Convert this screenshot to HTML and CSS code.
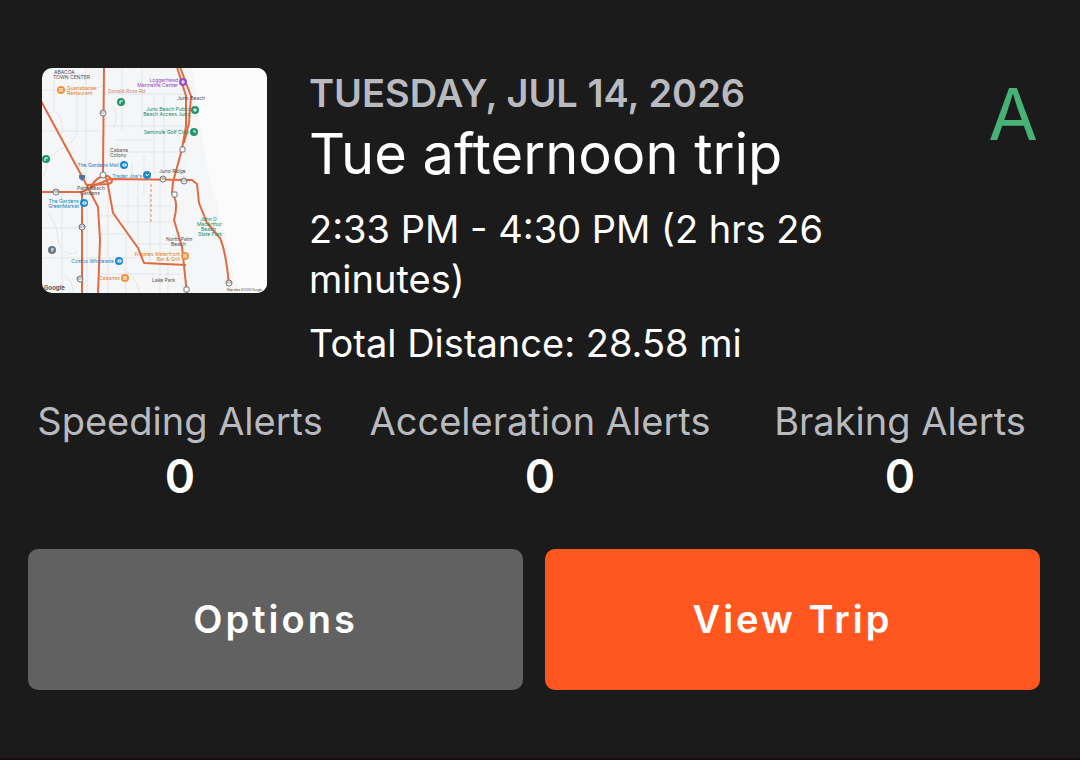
FILE: index.html
```
<!DOCTYPE html>
<html lang="en">
<head>
  <meta charset="UTF-8">
  <meta name="viewport" content="width=device-width, initial-scale=1">
  <title>Tue afternoon trip</title>
  <link rel="stylesheet" href="styles.css">
</head>
<body>
  <main class="trip">
    <div class="trip-top">
      <!-- route map -->
      <svg class="map" viewBox="0 0 225 225" role="img" aria-label="Trip map">
        <rect width="225" height="225" fill="#f5f6f7"/>
        <path d="M150 0 L158 55 L168 112 L180 155 L196 225 H225 V0Z" fill="#fbfbfc"/>
        <!-- side streets -->
        <g class="streets">
          <path d="M0 63H60 M62 58H150 M0 22H45L62 18 M44 0V112 M100 0V60 M12 12V42Q22 50 20 65 M35 24V62Q34 74 20 80T2 108"/>
          <path d="M80 0V62 M62 26H142 M112 26V106 M122 28V110 M62 84H138 M90 94V112 M102 88V128 M74 72H110 M120 62H145"/>
          <path d="M0 190H100 M20 125V225 M0 160H40 M66 126V225 M57 148H72 M57 166H82 M45 140V225 M56 206H140 M84 160V225"/>
          <path d="M86 112V158 M96 112V176 M108 126V195 M118 112V225 M70 138H130 M80 154H132 M95 176H138 M126 196V225"/>
          <path d="M4 145Q14 150 16 170T36 184 M72 196Q92 202 98 225 M70 38Q77 44 72 60 M22 206Q30 212 32 225"/>
        </g>
        <!-- highlighted roads -->
        <g class="roads">
          <path d="M-1 33L43 114L56 139L58 172L56 226"/>
          <path d="M62 -1L61 104L65 112L71 145L81 159L96 180L102 195L144 197"/>
          <path d="M-1 124H40V226"/>
          <path d="M40 124L56 116L68 111L150 112L155 116L157 135L165 155L178 170Q184 184 187 217"/>
          <path d="M135 -1L144 28V58L140 81L131 114L130 125Q137 134 132 152L140 179L145 226"/>
          <path d="M138 -1L149 28L147 55L142 75"/>
          <path d="M48 121Q54 107 66 108Q74 114 66 116L44 117"/>
        </g>
        <path d="M109 116V155" class="dashed"/>
        <!-- route shields -->
        <g class="shields">
          <circle cx="61" cy="45" r="3"/>
          <circle cx="14" cy="124" r="3"/>
          <circle cx="40" cy="159" r="3"/>
          <circle cx="38" cy="211" r="3"/>
          <circle cx="61" cy="107" r="3"/>
          <circle cx="121" cy="111" r="3"/>
          <circle cx="142" cy="113" r="3"/>
          <circle cx="187" cy="215" r="3"/>
          <rect x="138" y="79" width="5" height="5" rx="1"/>
          <rect x="130" y="124" width="5" height="5" rx="1"/>
          <rect x="142" y="219" width="5" height="5" rx="1"/>
        </g>
        <g class="route-no">
          <text x="61" y="46">811</text>
          <text x="14" y="125">786</text>
          <text x="40" y="160">809</text>
          <text x="38" y="212">809</text>
          <text x="121" y="112">786</text>
          <text x="142" y="114">A1A</text>
          <text x="187" y="216">A1A</text>
        </g>
        <!-- place pins -->
        <g class="pins">
          <circle cx="19" cy="22" r="4" fill="#ee923c"/>
          <circle cx="79" cy="34" r="4" fill="#21966b"/>
          <circle cx="4" cy="91" r="4" fill="#21966b"/>
          <circle cx="141" cy="14" r="4" fill="#9751c9"/>
          <circle cx="153" cy="42" r="4" fill="#21966b"/>
          <circle cx="152" cy="64" r="4" fill="#21966b"/>
          <circle cx="82" cy="97" r="4" fill="#1b8bd0"/>
          <circle cx="105" cy="107" r="4" fill="#1b8bd0"/>
          <circle cx="42" cy="135" r="4" fill="#1b8bd0"/>
          <circle cx="77" cy="193" r="4" fill="#1b8bd0"/>
          <circle cx="10" cy="182" r="4" fill="#647987"/>
          <circle cx="83" cy="210" r="4" fill="#ee923c"/>
          <circle cx="143" cy="188" r="4" fill="#ee923c"/>
          <path d="M37 107h6v3l-3 3l-3-3z" fill="#526fa8"/>
        </g>
        <g class="pin-marks">
          <path d="M18 20v4M20 20v4M78 33h3M78 33v3M3 90h3M3 90v3M139 14h4M141 12v4M152 43h2v-2h-2zM151 63h2v2M81 98v-2h3v2zM104 106l1 2l2-2M41 136v-2h3v2zM76 194v-2h3v2zM9 181h3M10 181v3M82 208v4M84 208v4M142 186v4M144 186v4"/>
        </g>
        <!-- labels -->
        <g class="labels">
          <g fill="#4c5158">
            <text x="12" y="6">ABACOA</text>
            <text x="11" y="11">TOWN CENTER</text>
            <text x="135" y="32">Juno Beach</text>
            <text x="68" y="84">Cabana</text>
            <text x="68" y="89">Colony</text>
            <text x="117" y="105">Juno Ridge</text>
            <text x="35" y="122">Palm Beach</text>
            <text x="38" y="127">Gardens</text>
            <text x="124" y="173">North Palm</text>
            <text x="129" y="178">Beach</text>
            <text x="110" y="214">Lake Park</text>
          </g>
          <g fill="#d9802c">
            <text x="25" y="22">Guanabanas</text>
            <text x="25" y="27">Restaurant</text>
            <text x="138" y="188" class="end">Frigates Waterfront</text>
            <text x="138" y="193" class="end">Bar &amp; Grill</text>
            <text x="78" y="212" class="end">Cabanas</text>
          </g>
          <g fill="#8b4bb8" class="end">
            <text x="136" y="14">Loggerhead</text>
            <text x="136" y="19">Marinelife Center</text>
          </g>
          <g fill="#218962" class="end">
            <text x="148" y="43">Juno Beach Public</text>
            <text x="148" y="48">Beach Access Juno</text>
            <text x="147" y="66">Seminole Golf Club</text>
          </g>
          <g fill="#218962">
            <text x="158" y="153">John D</text>
            <text x="155" y="158">MacArthur</text>
            <text x="159" y="163">Beach</text>
            <text x="156" y="168">State Park</text>
          </g>
          <g fill="#2480bd" class="end">
            <text x="77" y="99">The Gardens Mall</text>
            <text x="100" y="110">Trader Joe's</text>
            <text x="37" y="135">The Gardens</text>
            <text x="37" y="140">GreenMarket</text>
            <text x="72" y="195">Costco Wholesale</text>
          </g>
          <text x="66" y="25" fill="#c88978">Donald Ross Rd</text>
        </g>
        <text x="2" y="222" class="google">Google</text>
        <text x="220" y="223" class="credit end">Map data ©2026 Google</text>
      </svg>

      <div class="details">
        <p class="date">TUESDAY, JUL 14, 2026</p>
        <h1 class="title">Tue afternoon trip</h1>
        <p class="time">2:33 PM - 4:30 PM (2 hrs 26 minutes)</p>
        <p class="distance">Total Distance: 28.58 mi</p>
      </div>

      <div class="grade">A</div>
    </div>

    <dl class="alerts">
      <div>
        <dt>Speeding Alerts</dt>
        <dd>0</dd>
      </div>
      <div>
        <dt>Acceleration Alerts</dt>
        <dd>0</dd>
      </div>
      <div>
        <dt>Braking Alerts</dt>
        <dd>0</dd>
      </div>
    </dl>

    <div class="buttons">
      <button type="button" class="btn">Options</button>
      <button type="button" class="btn btn-view">View Trip</button>
    </div>
  </main>
</body>
</html>
```
FILE: styles.css
```
* {
  box-sizing: border-box;
}
body {
  margin: 0;
  background: #1b1b1b;
  color: #fff;
  font-family: Inter, "Liberation Sans", sans-serif;
}
p, h1, dl, dd {
  margin: 0;
}
.trip {
  min-height: 100vh;
  padding: 68px 0;
  border-bottom: 2px solid #180f13;
}
.trip-top {
  display: flex;
  align-items: flex-start;
  gap: 42px;
  padding: 0 42px;
}
.map {
  flex: none;
  width: 225px;
  height: 225px;
  border-radius: 10px;
}
.streets {
  fill: none;
  stroke: #e3e5e8;
  stroke-width: 1;
}
.roads {
  fill: none;
  stroke: #df6b42;
  stroke-width: 2;
  stroke-linejoin: round;
}
.dashed {
  stroke: #df8b6b;
  stroke-width: 1;
  stroke-dasharray: 3 2;
}
.shields {
  fill: #fff;
  stroke: #777;
  stroke-width: 1;
}
.route-no {
  font-size: 3px;
  text-anchor: middle;
  fill: #555;
}
.pin-marks {
  fill: none;
  stroke: #fff;
  stroke-width: 1;
}
.labels {
  font-size: 5px;
}
.end {
  text-anchor: end;
}
.google {
  font-size: 6px;
  font-weight: 700;
  fill: #555;
}
.credit {
  font-size: 3px;
  fill: #444;
}
.details {
  flex: 1;
  min-width: 0;
}
.date {
  color: #b9babf;
  font-size: 38px;
  font-weight: 600;
  line-height: 50px;
}
.title {
  font-size: 56px;
  font-weight: 400;
  line-height: 72px;
}
.time {
  margin-top: 14px;
  font-size: 38px;
  line-height: 50px;
}
.distance {
  margin-top: 14px;
  font-size: 38px;
  line-height: 50px;
}
.grade {
  padding-top: 8px;
  color: #46b276;
  font-size: 72px;
  line-height: 76px;
}
.alerts {
  display: grid;
  grid-template-columns: repeat(3, 1fr);
  margin-top: 28px;
  text-align: center;
}
.alerts dt {
  color: #b9babf;
  font-size: 38px;
  line-height: 50px;
}
.alerts dd {
  font-size: 46px;
  font-weight: 600;
  line-height: 60px;
}
.buttons {
  display: grid;
  grid-template-columns: 1fr 1fr;
  gap: 22px;
  margin-top: 43px;
  padding: 0 40px 0 28px;
}
.btn {
  padding: 45px 20px;
  border: 0;
  border-radius: 10px;
  background: #616161;
  color: #fff;
  font-family: inherit;
  font-size: 38px;
  font-weight: 600;
  line-height: 51px;
  letter-spacing: 3px;
}
.btn-view {
  background: #ff571f;
}
```
